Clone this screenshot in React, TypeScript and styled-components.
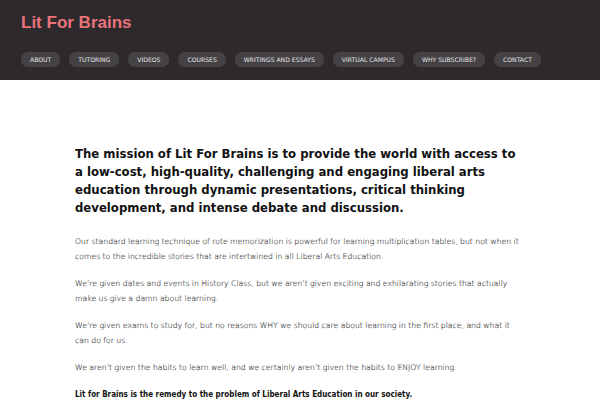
import React from 'react';
import styled, { createGlobalStyle } from 'styled-components';

const GlobalStyle = createGlobalStyle`
  html, body {
    margin: 0;
    padding: 0;
    background: #ffffff;
  }
`;

const Header = styled.header`
  background-color: #2d292d;
  height: 80px;
  padding: 0 21px;
  box-sizing: border-box;
  display: flex;
  flex-direction: column;
`;

const Logo = styled.h1`
  margin: 13px 0 0;
  font-family: 'Liberation Sans', Arial, sans-serif;
  font-size: 17px;
  font-weight: bold;
  color: #e8737b;
  line-height: 20px;
`;

const NavLinks = styled.nav`
  display: flex;
  gap: 9px;
  margin-top: 19px;
`;

const NavLink = styled.a`
  display: flex;
  align-items: center;
  height: 15px;
  padding: 0 9px;
  border-radius: 7px;
  background-color: #454246;
  color: #e4e2e4;
  font-family: 'DejaVu Sans', sans-serif;
  font-size: 6.1px;
  text-transform: uppercase;
  text-decoration: none;
  white-space: nowrap;
`;

const Content = styled.main`
  padding: 65px 75px 0;
`;

const Mission = styled.h2`
  margin: 0 0 17px;
  font-family: 'DejaVu Sans Condensed', 'DejaVu Sans', sans-serif;
  font-size: 13px;
  font-weight: bold;
  line-height: 18px;
  color: #111111;
`;

const Paragraph = styled.p<{ $strong?: boolean }>`
  margin: 0 0 12px;
  font-family: ${p => (p.$strong ? "'DejaVu Sans Condensed', 'DejaVu Sans'" : "'DejaVu Sans'")}, sans-serif;
  font-size: ${p => (p.$strong ? '8px' : '7.7px')};
  line-height: 15px;
  font-weight: ${p => (p.$strong ? 'bold' : '200')};
  color: ${p => (p.$strong ? '#111111' : '#2a2a2a')};
  -webkit-text-stroke: ${p => (p.$strong ? '0' : '0.12px #555555')};
`;

const links = [
  'About',
  'Tutoring',
  'Videos',
  'Courses',
  'Writings and Essays',
  'Virtual Campus',
  'Why Subscribe?',
  'Contact',
];

const App: React.FC = () => {
  return (
    <>
      <GlobalStyle />
      <Header>
        <Logo>Lit For Brains</Logo>
        <NavLinks>
          {links.map(l => (
            <NavLink key={l} href="#">
              {l}
            </NavLink>
          ))}
        </NavLinks>
      </Header>
      <Content>
        <Mission>
          The mission of Lit For Brains is to provide the world with access to a low-cost,
          high-quality, challenging and engaging liberal arts education through dynamic
          presentations, critical thinking development, and intense debate and discussion.
        </Mission>
        <Paragraph>
          Our standard learning technique of rote memorization is powerful for learning
          multiplication tables, but not when it comes to the incredible stories that are
          intertwined in all Liberal Arts Education.
        </Paragraph>
        <Paragraph>
          We’re given dates and events in History Class, but we aren’t given exciting and
          exhilarating stories that actually make us give a damn about learning.
        </Paragraph>
        <Paragraph>
          We’re given exams to study for, but no reasons WHY we should care about learning in
          the first place, and what it can do for us.
        </Paragraph>
        <Paragraph>
          We aren’t given the habits to learn well, and we certainly aren’t given the habits to
          ENJOY learning.
        </Paragraph>
        <Paragraph $strong>
          Lit for Brains is the remedy to the problem of Liberal Arts Education in our society.
        </Paragraph>
      </Content>
    </>
  );
};

export default App;
